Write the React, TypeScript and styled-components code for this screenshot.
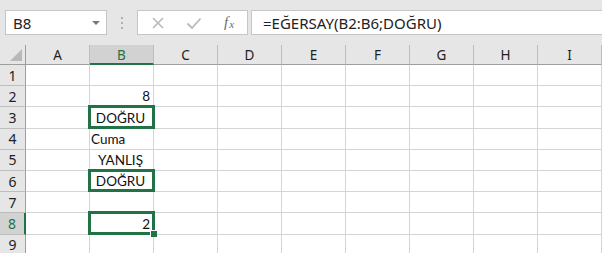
import React from "react";
import styled, { createGlobalStyle, css } from "styled-components";

const GREEN = "#217346";

const GlobalStyle = createGlobalStyle`
  html, body {
    margin: 0;
    padding: 0;
    background: #ffffff;
    overflow: hidden;
  }
  * { box-sizing: border-box; }
`;

const columns = ["A", "B", "C", "D", "E", "F", "G", "H", "I"];

type CellData = { text: string; align: "left" | "center" | "right"; boxed?: boolean; active?: boolean };

const cellsB: Record<number, CellData> = {
  2: { text: "8", align: "right" },
  3: { text: "DOĞRU", align: "center", boxed: true },
  4: { text: "Cuma", align: "left" },
  5: { text: "YANLIŞ", align: "center" },
  6: { text: "DOĞRU", align: "center", boxed: true },
  8: { text: "2", align: "right", boxed: true, active: true },
};

export default function App() {
  const rows = [1, 2, 3, 4, 5, 6, 7, 8, 9];
  return (
    <Page>
      <GlobalStyle />
      <Toolbar>
        <NameBox>
          <span>B8</span>
          <DropArrow />
        </NameBox>
        <Grip>
          <i />
          <i />
          <i />
        </Grip>
        <FxButtons>
          <FxIcon>
            <svg width="14" height="14" viewBox="0 0 14 14">
              <path d="M2 2 L12 12 M12 2 L2 12" stroke="#b9b9b9" strokeWidth="1.6" fill="none" />
            </svg>
          </FxIcon>
          <FxIcon>
            <svg width="16" height="14" viewBox="0 0 16 14">
              <path d="M1.5 7.5 L6 12 L14.5 2.5" stroke="#b9b9b9" strokeWidth="1.8" fill="none" />
            </svg>
          </FxIcon>
          <FxText>
            f<sub>x</sub>
          </FxText>
        </FxButtons>
        <FormulaInput>=EĞERSAY(B2:B6;DOĞRU)</FormulaInput>
      </Toolbar>
      <Sheet>
        <Corner>
          <CornerTriangle />
        </Corner>
        {columns.map((c) => (
          <ColHeader key={c} $selected={c === "B"}>
            {c}
          </ColHeader>
        ))}
        <Filler $header />
        {rows.map((r) => (
          <React.Fragment key={r}>
            <RowHeader $selected={r === 8}>{r}</RowHeader>
            {columns.map((c) => {
              const data = c === "B" ? cellsB[r] : undefined;
              return (
                <Cell key={c} $align={data?.align ?? "left"}>
                  {data?.text}
                  {data?.boxed && (
                    <SelectionBox>{data.active && <FillHandle />}</SelectionBox>
                  )}
                </Cell>
              );
            })}
            <Filler />
          </React.Fragment>
        ))}
      </Sheet>
    </Page>
  );
}

const Page = styled.div`
  width: 602px;
  height: 253px;
  overflow: hidden;
  background: #ffffff;
`;

const Toolbar = styled.div`
  height: 45px;
  background: #e6e6e6;
  display: flex;
  align-items: flex-start;
  padding: 10px 0 0 5px;
`;

const NameBox = styled.div`
  width: 102px;
  height: 25px;
  background: #ffffff;
  border: 1px solid #c6c6c6;
  display: flex;
  align-items: center;
  justify-content: space-between;
  padding: 0 5px 0 7px;
  font-family: "Noto Sans", "Open Sans", sans-serif;
  font-size: 15px;
  color: #222;
`;

const DropArrow = styled.div`
  width: 0;
  height: 0;
  border-left: 4px solid transparent;
  border-right: 4px solid transparent;
  border-top: 4px solid #7a7a7a;
  margin-right: 1px;
`;

const Grip = styled.div`
  width: 30px;
  height: 25px;
  display: flex;
  flex-direction: column;
  align-items: center;
  justify-content: center;
  gap: 3px;
  i {
    display: block;
    width: 2px;
    height: 2px;
    background: #b0b0b0;
  }
`;

const FxButtons = styled.div`
  width: 111px;
  height: 25px;
  background: #ffffff;
  border: 1px solid #c6c6c6;
  display: flex;
  align-items: center;
  padding-left: 12px;
  gap: 20px;
`;

const FxIcon = styled.div`
  width: 16px;
  display: flex;
  align-items: center;
  justify-content: center;
`;

const FxText = styled.div`
  font-family: "Liberation Serif", serif;
  font-style: italic;
  font-size: 15px;
  color: #6b6b6b;
  margin-left: 2px;
  sub {
    font-size: 11px;
    vertical-align: -1px;
    margin-left: 1px;
  }
`;

const FormulaInput = styled.div`
  flex: 1;
  height: 25px;
  margin-left: 3px;
  background: #ffffff;
  border: 1px solid #c6c6c6;
  border-right: none;
  padding-left: 11px;
  display: flex;
  align-items: center;
  font-family: "Noto Sans", "Open Sans", sans-serif;
  font-size: 15px;
  color: #222;
`;

const Sheet = styled.div`
  display: grid;
  grid-template-columns: 26px repeat(9, 64px) 1fr;
  grid-template-rows: 20px repeat(9, 21.2px);
  background: #e6e6e6;
`;

const headerBase = css`
  background: #e6e6e6;
  display: flex;
  align-items: center;
  justify-content: center;
  font-family: "Noto Sans", "Open Sans", sans-serif;
  font-size: 13.5px;
  color: #222;
`;

const Corner = styled.div`
  ${headerBase};
  position: relative;
  border-right: 1px solid #9e9e9e;
  border-bottom: 1px solid #9e9e9e;
`;

const CornerTriangle = styled.div`
  position: absolute;
  right: 3px;
  bottom: 3px;
  width: 0;
  height: 0;
  border-left: 12px solid transparent;
  border-bottom: 12px solid #b8b8b8;
`;

const ColHeader = styled.div<{ $selected?: boolean }>`
  ${headerBase};
  border-right: 1px solid #bdbdbd;
  border-bottom: 1px solid #9e9e9e;
  padding-top: 1px;
  ${(p) =>
    p.$selected &&
    css`
      background: #d2d2d2;
      color: ${GREEN};
      border-bottom: 2px solid ${GREEN};
    `}
`;

const RowHeader = styled.div<{ $selected?: boolean }>`
  ${headerBase};
  border-right: 1px solid #9e9e9e;
  border-bottom: 1px solid #bdbdbd;
  font-size: 14px;
  line-height: 15px;
  ${(p) =>
    p.$selected &&
    css`
      background: #d2d2d2;
      color: ${GREEN};
      border-right: 2px solid ${GREEN};
    `}
`;

const Filler = styled.div<{ $header?: boolean }>`
  background: ${(p) => (p.$header ? "#e6e6e6" : "#ffffff")};
  border-bottom: 1px solid ${(p) => (p.$header ? "#9e9e9e" : "#d4d4d4")};
`;

const Cell = styled.div<{ $align: "left" | "center" | "right" }>`
  position: relative;
  background: #ffffff;
  border-right: 1px solid #d4d4d4;
  border-bottom: 1px solid #d4d4d4;
  display: flex;
  align-items: flex-end;
  padding: 0 3px 1px 1px;
  justify-content: ${(p) =>
    p.$align === "right" ? "flex-end" : p.$align === "center" ? "center" : "flex-start"};
  font-family: Lato, "Liberation Sans", sans-serif;
  font-size: 13.5px;
  line-height: 18px;
  color: #111;
`;

const SelectionBox = styled.div`
  position: absolute;
  z-index: 2;
  left: -2px;
  top: -2px;
  right: -2px;
  bottom: -1px;
  border: 3px solid ${GREEN};
  pointer-events: none;
`;

const FillHandle = styled.div`
  position: absolute;
  right: -5px;
  bottom: -5px;
  width: 7px;
  height: 7px;
  background: ${GREEN};
  border: 1px solid #ffffff;
  border-right: none;
  border-bottom: none;
`;
